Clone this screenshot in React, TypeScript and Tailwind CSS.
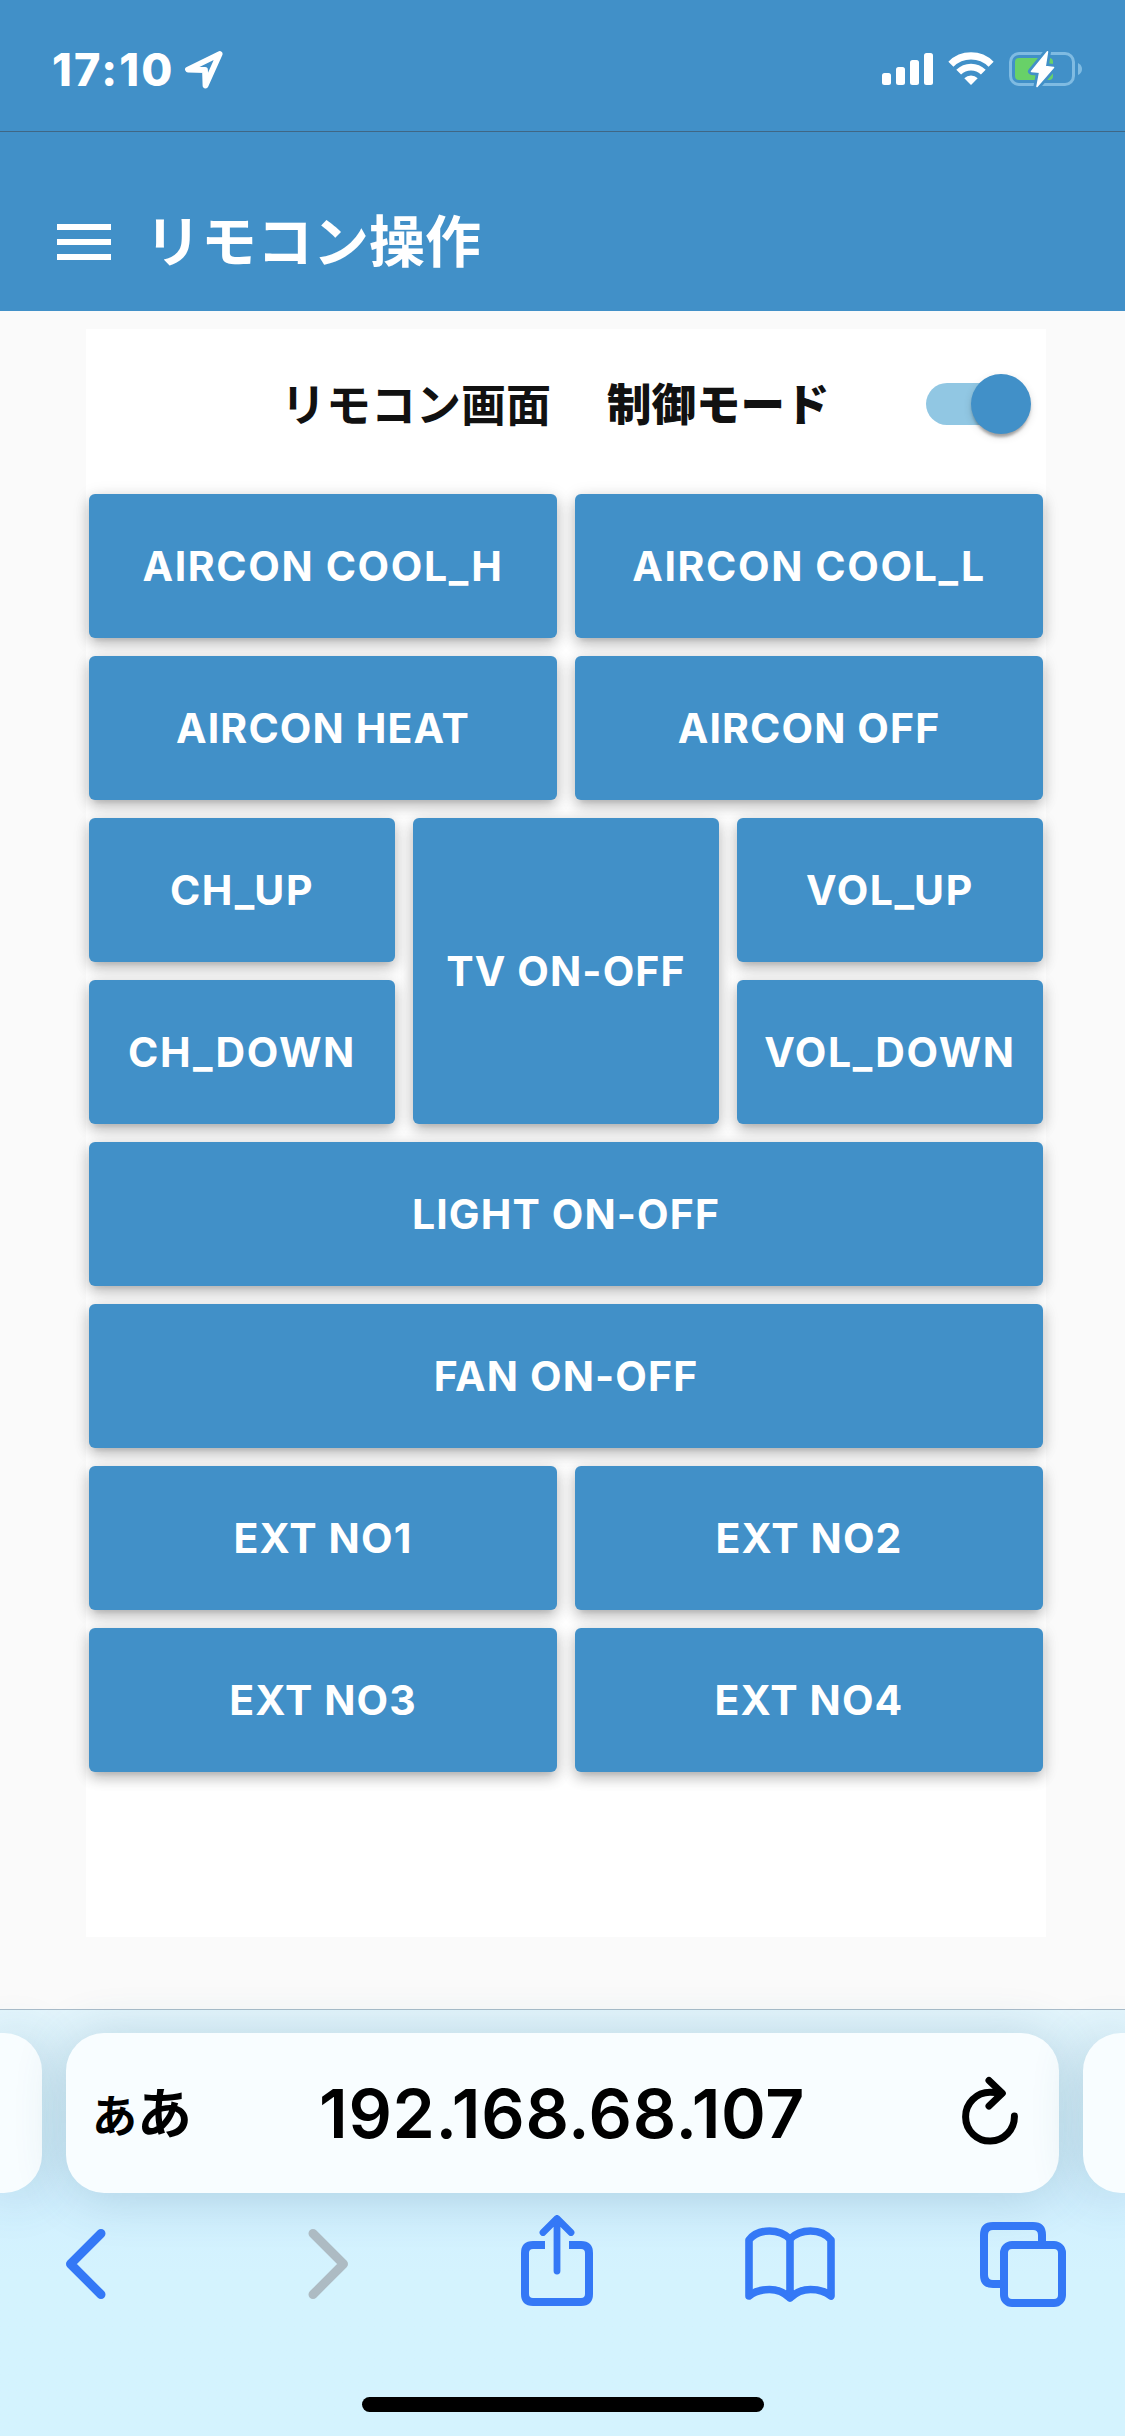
import React from "react";

const JP = "font-['Inter','Noto_Sans_CJK_JP',sans-serif]";

function StatusBar() {
  return (
    <div className="flex h-[132px] shrink-0 items-start border-b border-[#3f6785] pt-[51px] pl-[52px] text-white">
      <span className="flex h-9 w-[133px] items-center text-[45px] leading-none font-extrabold tracking-[2.2px]">17:10</span>
      <svg className="h-[38px] w-[38px]" viewBox="0 0 38 38" fill="none" stroke="currentColor" strokeWidth="5.8" strokeLinejoin="round">
        <path d="M34.6 3 L3 18.5 L20 19 L20.5 34.5 Z" />
      </svg>
      <svg className="ml-[659px] h-9 w-[51px]" viewBox="0 0 51 36" fill="currentColor">
        <rect x="0" y="22" width="9" height="12" rx="2.5" />
        <rect x="14" y="16" width="9" height="18" rx="2.5" />
        <rect x="28" y="9" width="9" height="25" rx="2.5" />
        <rect x="42" y="2" width="9" height="32" rx="2.5" />
      </svg>
      <svg className="ml-[15px] h-9 w-[46px]" viewBox="0 0 46 36" fill="none" stroke="currentColor">
        <path d="M2.9 13.2 A28.5 28.5 0 0 1 43.1 13.2" strokeWidth="7.2" />
        <path d="M10.7 21.2 A17.5 17.5 0 0 1 35.3 21.2" strokeWidth="6.8" />
        <path d="M23 34 L16.3 27.3 A9.5 9.5 0 0 1 29.7 27.3 Z" fill="currentColor" stroke="none" />
      </svg>
      <svg className="ml-[15px] h-[38px] w-[74px]" viewBox="0 0 74 38">
        <rect x="1.5" y="2.5" width="63" height="31" rx="8.5" fill="none" stroke="#7fbbe2" strokeWidth="3" />
        <path d="M69 12 Q73 14 73 18 Q73 22 69 24 Z" fill="#7fbbe2" />
        <rect x="6" y="7" width="38" height="22" rx="4" fill="#68d168" />
        <path d="M38.5 0.8 L22.5 20.4 L30.7 21.2 L28 35.5 L44.5 16.4 L36.2 15.6 Z" fill="white" stroke="#4190c8" strokeWidth="7" strokeLinejoin="round" />
        <path d="M38.5 0.8 L22.5 20.4 L30.7 21.2 L28 35.5 L44.5 16.4 L36.2 15.6 Z" fill="white" stroke="white" strokeWidth="1.5" strokeLinejoin="round" />
      </svg>
    </div>
  );
}

function AppHeader() {
  return (
    <header className="flex h-[179px] shrink-0 items-center pt-[41px] pl-[57px] text-white">
      <div className="flex w-[54px] flex-col gap-[9px]">
        <span className="h-1.5 bg-white" />
        <span className="h-1.5 bg-white" />
        <span className="h-1.5 bg-white" />
      </div>
      <h1 className="ml-[34px] text-[56px] leading-none font-bold">リモコン操作</h1>
    </header>
  );
}

function RemoteButton({ label, span }: { label: string; span: string }) {
  const tracking = label.includes("_") ? "tracking-[1.6px]" : "tracking-[1.1px]";
  return (
    <button
      className={`${span} ${tracking} rounded-[6px] bg-[#4190c8] text-[41px] leading-none font-[650] whitespace-nowrap text-white shadow-[0_9px_3px_-6px_rgba(0,0,0,0.06),0_6px_14px_0_rgba(0,0,0,0.2),0_3px_18px_0_rgba(0,0,0,0.12)]`}
    >
      {label}
    </button>
  );
}

const BUTTONS = [
  { label: "AIRCON COOL_H", span: "col-span-3" },
  { label: "AIRCON COOL_L", span: "col-span-3" },
  { label: "AIRCON HEAT", span: "col-span-3" },
  { label: "AIRCON OFF", span: "col-span-3" },
  { label: "CH_UP", span: "col-span-2" },
  { label: "TV ON-OFF", span: "col-span-2 row-span-2" },
  { label: "VOL_UP", span: "col-span-2" },
  { label: "CH_DOWN", span: "col-span-2" },
  { label: "VOL_DOWN", span: "col-span-2" },
  { label: "LIGHT ON-OFF", span: "col-span-6" },
  { label: "FAN ON-OFF", span: "col-span-6" },
  { label: "EXT NO1", span: "col-span-3" },
  { label: "EXT NO2", span: "col-span-3" },
  { label: "EXT NO3", span: "col-span-3" },
  { label: "EXT NO4", span: "col-span-3" },
];

function RemotePanel() {
  return (
    <section className="mt-[18px] ml-[86px] h-[1608px] w-[960px] bg-white px-[3px]">
      <div className="flex h-[165px] items-center pb-[15px] text-[45px] leading-none text-[#111]">
        <span className="ml-[192px] w-[270px] pt-0.5 font-semibold">リモコン画面</span>
        <span className="ml-[56px] w-[225px] pt-0.5 text-[44.5px] font-extrabold">制御モード</span>
        <span className="ml-[94px] flex h-[42px] w-[102px] items-center rounded-full bg-[#91c7e3]">
          <span className="ml-[45px] size-[60px] shrink-0 rounded-full bg-[#4190c8] shadow-[0_6px_3px_-3px_rgba(0,0,0,0.2),0_3px_3px_0_rgba(0,0,0,0.14),0_3px_9px_0_rgba(0,0,0,0.12)]" />
        </span>
      </div>
      <div className="grid auto-rows-[144px] grid-cols-6 gap-[18px]">
        {BUTTONS.map((b) => (
          <RemoteButton key={b.label} {...b} />
        ))}
      </div>
    </section>
  );
}

function AddressRow() {
  const pill = "h-[160px] bg-[#f8fdff] shadow-[0_4px_50px_rgba(50,105,130,0.24)]";
  return (
    <div className="flex gap-6">
      <div className={`${pill} w-[42px] rounded-r-[38px]`} />
      <div className={`${pill} flex w-[993px] items-center rounded-[38px] text-black`}>
        <div className="ml-[26px] flex w-[102px] items-baseline leading-none font-bold">
          <span className="text-[45px]">あ</span>
          <span className="text-[55px]">あ</span>
        </div>
        <span className="ml-[125px] w-[500px] text-[68px] leading-none font-semibold tracking-[0.65px] whitespace-nowrap">192.168.68.107</span>
        <svg className="mb-[5px] ml-[141px] h-[72px] w-[60px]" viewBox="0 0 60 72" fill="none" stroke="currentColor" strokeWidth="7" strokeLinecap="round" strokeLinejoin="round">
          <path d="M41 18.3 Q36 17.3 30 17.3 A24.4 24.4 0 1 0 54.4 41" />
          <path d="M29 5.5 L42.3 18.3 L29 31" />
        </svg>
      </div>
      <div className={`${pill} w-[42px] rounded-l-[38px]`} />
    </div>
  );
}

function Toolbar() {
  return (
    <nav className="mt-[22px] flex h-[92px] text-[#3478f6]">
      <svg className="mt-[14px] ml-[65px] h-[70px] w-[41px]" viewBox="0 0 41 70" fill="none" stroke="currentColor" strokeWidth="9" strokeLinecap="round" strokeLinejoin="round">
        <path d="M36 4.5 L5.5 35 L36 65.5" />
      </svg>
      <svg className="mt-[14px] ml-[202px] h-[70px] w-[41px]" viewBox="0 0 41 70" fill="none" stroke="#adbbc3" strokeWidth="9" strokeLinecap="round" strokeLinejoin="round">
        <path d="M5 4.5 L35.5 35 L5 65.5" />
      </svg>
      <svg className="ml-[172px] h-[92px] w-[72px]" viewBox="0 0 72 92" fill="none" stroke="currentColor">
        <path d="M24 30 H12 Q4 30 4 38 V79 Q4 87 12 87 H60 Q68 87 68 79 V38 Q68 30 60 30 H48" strokeWidth="8" />
        <path d="M36 4 V56 M22 17.5 L36 3.5 L50 17.5" strokeWidth="6.8" strokeLinecap="round" strokeLinejoin="round" />
      </svg>
      <svg className="mt-3 ml-[152px] h-[75px] w-[90px]" viewBox="0 0 90 75" fill="none" stroke="currentColor" strokeWidth="7.6" strokeLinecap="round" strokeLinejoin="round">
        <path d="M45 12 Q37 4 24.5 4 Q11 4 4 13 V69 Q12 62.5 24.5 62.5 Q36 62.5 45 71 Q54 62.5 65.5 62.5 Q78 62.5 86 69 V13 Q79 4 65.5 4 Q53 4 45 12 V71" />
      </svg>
      <svg className="mt-[7px] ml-[145px] h-[85px] w-[86px]" viewBox="0 0 86 85" fill="none" stroke="currentColor" strokeWidth="8">
        <path d="M62 21 V13 Q62 4 53 4 H13 Q4 4 4 13 V53 Q4 62 13 62 H21" />
        <rect x="24" y="23" width="58" height="58" rx="8" />
      </svg>
    </nav>
  );
}

export default function App() {
  return (
    <div className={`${JP} flex h-[2436px] w-[1125px] flex-col overflow-hidden bg-[#fafafa]`}>
      <div className="flex h-[311px] shrink-0 flex-col bg-[#4190c8]">
        <StatusBar />
        <AppHeader />
      </div>
      <main className="h-[1698px] shrink-0 bg-[#fafafa]">
        <RemotePanel />
      </main>
      <footer className="flex h-[427px] shrink-0 flex-col border-t border-[#a9bcca] bg-linear-to-b from-[#e3f5fc] via-[#d2f0ff] via-45% to-[#d4f3fe] to-62% pt-[23px]">
        <AddressRow />
        <Toolbar />
        <div className="mt-[90px] ml-[362px] h-[15px] w-[402px] rounded-full bg-black" />
      </footer>
    </div>
  );
}
